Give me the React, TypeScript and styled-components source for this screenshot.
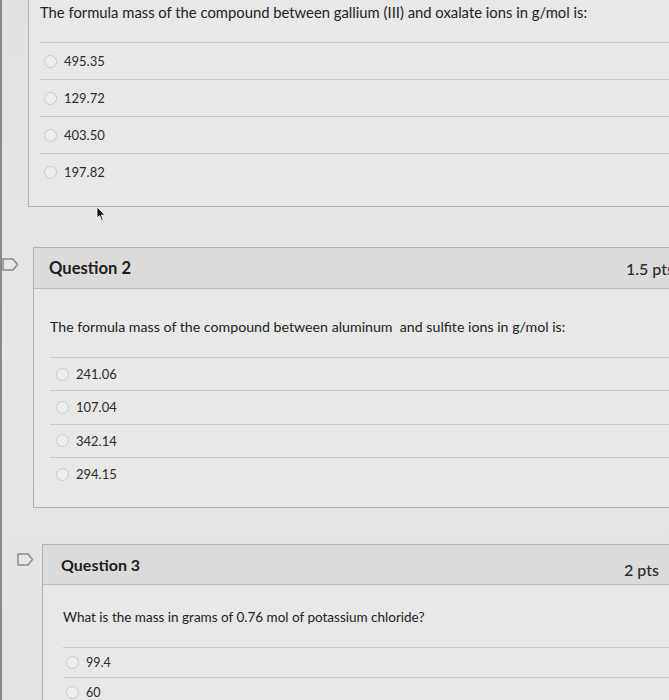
import React from 'react';
import styled, {createGlobalStyle} from "styled-components";

const GlobalStyle = createGlobalStyle`
  html, body {
    margin: 0;
    padding: 0;
    background: #e4e4e4;
  }

  body {
    font-family: Lato, "Open Sans", sans-serif;
    color: #262626;
  }
`

const Page = styled.div`
  position: relative;
  width: 669px;
  height: 700px;
  overflow: hidden;
  border-left: 2px solid #8a8a8a;
  box-sizing: border-box;
  background: linear-gradient(180deg, #e2e2e2 0%, #e7e7e7 50%, #e3e3e3 100%);
`

const QuestionWrap = styled.div<{ $top: number }>`
  display: flex;
  align-items: flex-start;
  margin-top: ${p => p.$top}px;
`

const Bookmark = styled.div<{ $width: number; $offset: number; $left?: number }>`
  width: ${p => p.$width}px;
  flex-shrink: 0;
  display: flex;
  padding-top: ${p => p.$offset}px;
  padding-left: ${p => p.$left || 0}px;
  box-sizing: border-box;

  svg {
    display: block;
  }
`

const Card = styled.div<{ $width: number; $open?: boolean }>`
  width: ${p => p.$width}px;
  flex-shrink: 0;
  border: 1px solid #b3b3b3;
  border-top: ${p => (p.$open ? 'none' : '1px solid #b3b3b3')};
  border-right: none;
  background: #e8e8e8;
`

const Header = styled.div<{ $pad: number; $height: number }>`
  height: ${p => p.$height}px;
  display: flex;
  align-items: center;
  justify-content: space-between;
  padding: 0 0 0 ${p => p.$pad}px;
  background: #dbdbdb;
  border-bottom: 1px solid #bdbdbd;
`

const Title = styled.h3<{ $size: number }>`
  margin: 0;
  font-size: ${p => p.$size}px;
  font-weight: 700;
  color: #1e1e1e;
`

const Points = styled.span<{ $right: number; $drop: number }>`
  font-size: 16px;
  font-weight: 500;
  color: #2a2a2a;
  white-space: nowrap;
  margin-right: ${p => p.$right}px;
  padding-top: ${p => p.$drop}px;
`

const Body = styled.div<{ $pad: number; $top: number; $bottom: number }>`
  padding: ${p => p.$top}px 0 ${p => p.$bottom}px ${p => p.$pad}px;
`

const Prompt = styled.p<{ $size: number }>`
  margin: 0 0 20px 0;
  font-size: ${p => p.$size}px;
  line-height: 20px;
  color: #222;
  white-space: nowrap;
`

const Answer = styled.label<{ $height: number; $size: number; $pad: number }>`
  display: flex;
  align-items: center;
  height: ${p => p.$height}px;
  border-top: 1px solid #c9c9c9;
  font-size: ${p => p.$size}px;
  color: #2b2b2b;
  box-sizing: border-box;
  padding-left: ${p => p.$pad}px;
`

const Radio = styled.span`
  width: 11px;
  height: 11px;
  border-radius: 50%;
  border: 1px solid #c9c9c9;
  background: #ededed;
  margin-right: 7px;
  flex-shrink: 0;
`

const Cursor = styled.svg`
  position: absolute;
  left: 94px;
  top: 206px;
`

const BookmarkIcon: React.FC = () => (
  <svg width="17" height="13" viewBox="0 0 17 13">
    <path d="M1 1 H11 L15.5 6.5 L11 12 H1 Z" fill="#e6e6e6" stroke="#8c8c8c" strokeWidth="1.5"
          strokeLinejoin="round"/>
  </svg>
);

const Question1: React.FC = () => (
  <QuestionWrap $top={0}>
    <Bookmark $width={26} $offset={0}/>
    <Card $width={660} $open>
      <Body $pad={11} $top={2} $bottom={16}>
        <Prompt $size={14.8}>The formula mass of the compound between gallium (III) and oxalate ions in g/mol is:</Prompt>
        {['495.35', '129.72', '403.50', '197.82'].map(a => (
          <Answer key={a} $height={37} $size={13} $pad={4}><Radio/>{a}</Answer>
        ))}
      </Body>
    </Card>
  </QuestionWrap>
);

const Question2: React.FC = () => (
  <QuestionWrap $top={40}>
    <Bookmark $width={31} $offset={11}><BookmarkIcon/></Bookmark>
    <Card $width={650}>
      <Header $pad={15} $height={40}>
        <Title $size={16.6}>Question 2</Title>
        <Points $right={10} $drop={0}>1.5 pts</Points>
      </Header>
      <Body $pad={16} $top={28} $bottom={17}>
        <Prompt $size={14.2}>The formula mass of the compound between aluminum&nbsp; and sulfite ions in g/mol is:</Prompt>
        {['241.06', '107.04', '342.14', '294.15'].map(a => (
          <Answer key={a} $height={33.3} $size={13} $pad={6}><Radio/>{a}</Answer>
        ))}
      </Body>
    </Card>
  </QuestionWrap>
);

const Question3: React.FC = () => (
  <QuestionWrap $top={36}>
    <Bookmark $width={40} $offset={9} $left={15}><BookmarkIcon/></Bookmark>
    <Card $width={640}>
      <Header $pad={18} $height={39}>
        <Title $size={16}>Question 3</Title>
        <Points $right={24} $drop={10}>2 pts</Points>
      </Header>
      <Body $pad={20} $top={22} $bottom={0}>
        <Prompt $size={13.5}>What is the mass in grams of 0.76 mol of potassium chloride?</Prompt>
        {['99.4', '60'].map(a => (
          <Answer key={a} $height={30} $size={12.5} $pad={3}><Radio/>{a}</Answer>
        ))}
      </Body>
    </Card>
  </QuestionWrap>
);

const App: React.FC = () => {
  return (
    <Page>
      <GlobalStyle/>
      <Question1/>
      <Question2/>
      <Question3/>
      <Cursor width="10" height="16" viewBox="0 0 10 16">
        <path d="M1 1 L1 12 L3.6 9.6 L5.6 14.5 L7.2 13.8 L5.3 9 L8.8 9 Z" fill="#111" stroke="#fff"
              strokeWidth="0.8"/>
      </Cursor>
    </Page>
  );
};

export default App;
